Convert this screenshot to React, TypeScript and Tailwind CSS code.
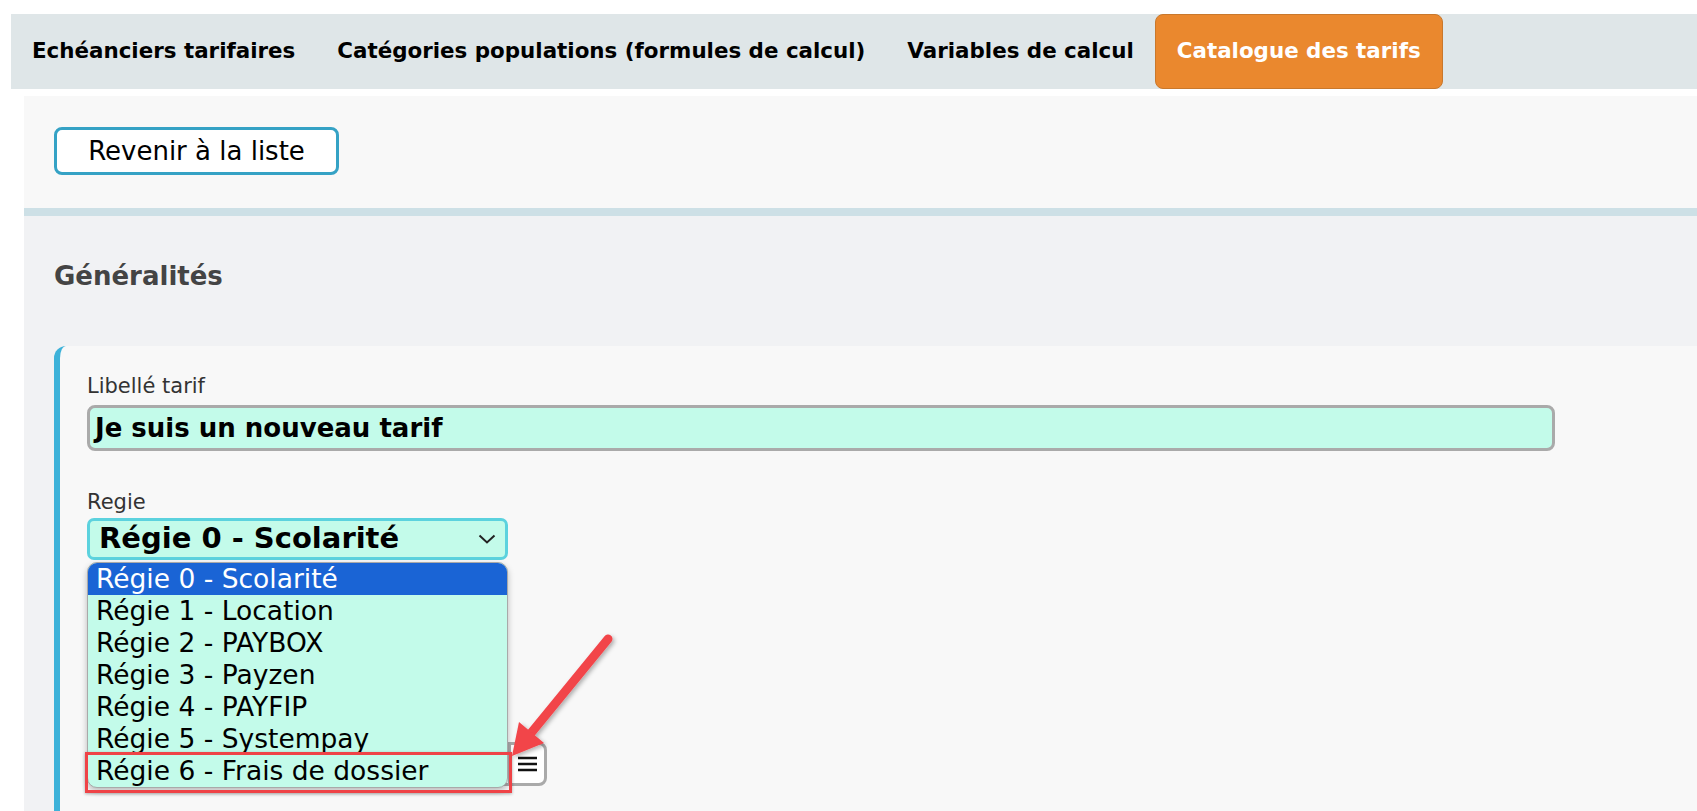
import React from "react";

const TABS = [
  "Echéanciers tarifaires",
  "Catégories populations (formules de calcul)",
  "Variables de calcul",
  "Catalogue des tarifs",
];

const REGIES = [
  "Régie 0 - Scolarité",
  "Régie 1 - Location",
  "Régie 2 - PAYBOX",
  "Régie 3 - Payzen",
  "Régie 4 - PAYFIP",
  "Régie 5 - Systempay",
  "Régie 6 - Frais de dossier",
];

function Tabs() {
  return (
    <nav className="flex h-[75px] bg-[#dfe6e8]">
      {TABS.map((t, i) =>
        i === 3 ? (
          <div
            key={t}
            className="flex items-center rounded-[8px] border border-[#c9782c] bg-[#ea882e] px-[21px] text-[21.4px] font-bold text-white"
          >
            {t}
          </div>
        ) : (
          <div key={t} className="flex items-center px-[21px] text-[21.4px] font-bold text-black">
            {t}
          </div>
        )
      )}
    </nav>
  );
}

function RegieSelect() {
  return (
    <div className="relative w-[421px]">
      <div className="flex h-[42px] items-center justify-between rounded-[7px] border-[3px] border-[#5cd2de] bg-[#c3fbea] pl-[9px] pr-[9px] text-[29px] font-bold">
        <span>Régie 0 - Scolarité</span>
        <svg width="18" height="10" viewBox="0 0 18 10" fill="none">
          <path d="M1.5 1.5 L9 8.5 L16.5 1.5" stroke="#222" strokeWidth="2" />
        </svg>
      </div>
      {/* open option list */}
      <ul className="absolute left-0 top-[calc(100%+2px)] z-10 w-[421px] overflow-hidden rounded-[10px] border border-[#a9a9a9] bg-[#c3fbea] shadow-[0_3px_6px_rgba(0,0,0,0.25)]">
        {REGIES.map((r, i) => (
          <li
            key={r}
            className={
              i === 0
                ? "h-[32px] bg-[#1a64d5] pl-[8px] text-[26.5px] leading-[32px] text-white"
                : "h-[32px] pl-[8px] text-[26.5px] leading-[32px] text-black"
            }
          >
            {r}
          </li>
        ))}
      </ul>
    </div>
  );
}

function Annotation() {
  return (
    <>
      <div className="absolute left-[85px] top-[752px] z-20 h-[41px] w-[427px] border-[3px] border-[#ef4347] shadow-[0_1px_3px_rgba(0,0,0,0.3)]" />
      <svg className="absolute left-[490px] top-[620px] z-20" width="140" height="150" viewBox="490 620 140 150">
        <defs>
          <filter id="sh" x="-20%" y="-20%" width="140%" height="140%">
            <feDropShadow dx="2" dy="2" stdDeviation="2" floodColor="#000" floodOpacity="0.3" />
          </filter>
        </defs>
        <g filter="url(#sh)">
          <line x1="608" y1="639" x2="527" y2="738" stroke="#f2444a" strokeWidth="9" strokeLinecap="round" />
          <polygon points="512,756 519,722 544,743" fill="#f2444a" />
        </g>
      </svg>
    </>
  );
}

export default function App() {
  return (
    <div className="relative h-[811px] overflow-hidden bg-white font-['DejaVu_Sans',sans-serif] text-black">
      <div className="pl-[11px] pt-[14px]">
        <Tabs />
      </div>

      <div className="ml-[24px] mt-[7px]">
        <div className="border-b-[8px] border-[#cde0e6] bg-[#f8f8f8] pb-[33px] pl-[30px] pt-[31px]">
          <button className="h-[48px] w-[285px] rounded-[8px] border-[3px] border-[#35a2c5] bg-white text-[26px] text-black">
            Revenir à la liste
          </button>
        </div>

        <div className="h-[600px] bg-[#f1f2f4] pl-[30px] pt-[45px]">
          <h2 className="mb-[55px] text-[26px] font-bold leading-[30px] text-[#444]">Généralités</h2>

          <div className="h-[500px] rounded-tl-[12px] border-l-[6px] border-[#3db2d9] bg-[#f8f8f8] pl-[27px] pt-[28px]">
            <label className="block text-[21px] leading-[24px] text-[#333]">Libellé tarif</label>
            <div className="mt-[7px] flex h-[46px] w-[1468px] items-center rounded-[8px] border-[3px] border-[#aaa] bg-[#c3fbea] pl-[5px] text-[26px] font-bold">
              Je suis un nouveau tarif
            </div>

            <label className="mt-[39px] block text-[21px] leading-[24px] text-[#333]">Regie</label>
            <div className="mt-[4px]">
              <RegieSelect />
            </div>

            {/* fields hidden behind the open list */}
            <div className="mt-[72px] h-[46px] w-[421px] rounded-[8px] border-[3px] border-[#999] bg-[#f8f8f8]" />
            <div className="mt-[64px] flex h-[44px] w-[460px]">
              <div className="flex-1 rounded-l-[8px] border-[3px] border-r-0 border-[#aaa] bg-white" />
              <button className="flex w-[39px] items-center justify-center rounded-r-[8px] border-[3px] border-[#aaa] bg-white">
                <svg width="21" height="16" viewBox="0 0 21 16">
                  <path d="M1 2 H20 M1 8 H20 M1 14 H20" stroke="#111" strokeWidth="2.6" />
                </svg>
              </button>
            </div>
          </div>
        </div>
      </div>

      <Annotation />
    </div>
  );
}
